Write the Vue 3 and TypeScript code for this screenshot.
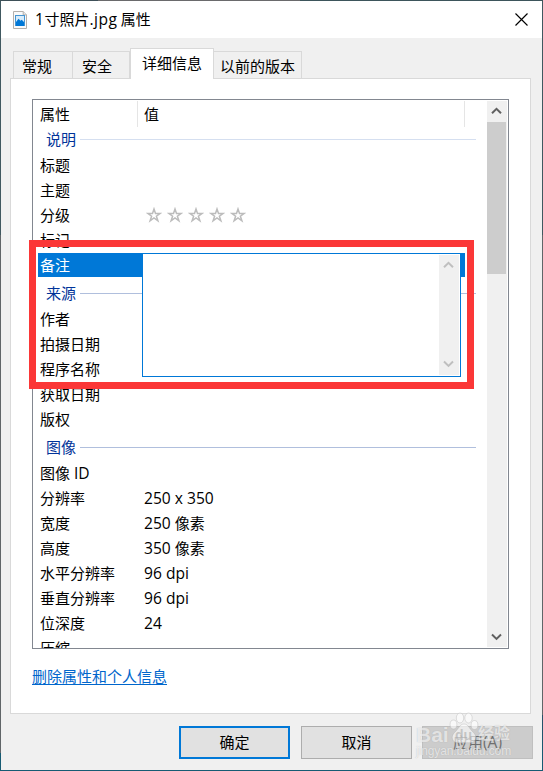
<script setup lang="ts">
interface Row {
  kind: 'group' | 'row'
  label: string
  latin?: string
  unit?: string
  value?: string
  rating?: boolean
  selected?: boolean
}

const tabs: { label: string; cls: string }[] = [
  { label: '常规', cls: 'general' },
  { label: '安全', cls: 'security' },
  { label: '详细信息', cls: 'active' },
  { label: '以前的版本', cls: 'previous' },
]

const rows: Row[] = [
  { kind: 'group', label: '说明' },
  { kind: 'row', label: '标题' },
  { kind: 'row', label: '主题' },
  { kind: 'row', label: '分级', rating: true },
  { kind: 'row', label: '标记' },
  { kind: 'row', label: '备注', selected: true },
  { kind: 'group', label: '来源' },
  { kind: 'row', label: '作者' },
  { kind: 'row', label: '拍摄日期' },
  { kind: 'row', label: '程序名称' },
  { kind: 'row', label: '获取日期' },
  { kind: 'row', label: '版权' },
  { kind: 'group', label: '图像' },
  { kind: 'row', label: '图像', latin: 'ID' },
  { kind: 'row', label: '分辨率', value: '250 x 350' },
  { kind: 'row', label: '宽度', value: '250', unit: '像素' },
  { kind: 'row', label: '高度', value: '350', unit: '像素' },
  { kind: 'row', label: '水平分辨率', value: '96 dpi' },
  { kind: 'row', label: '垂直分辨率', value: '96 dpi' },
  { kind: 'row', label: '位深度', value: '24' },
  { kind: 'row', label: '压缩' },
]
</script>

<template>
  <div class="frame">
    <div class="window">
      <header class="titlebar">
        <svg class="file-icon" width="14" height="18" viewBox="0 0 14 18">
          <path d="M.5.5h9.7l3.3 3.4v13.6H.5z" fill="#fafafa" stroke="#b3b0ad" />
          <path d="M10.2.5v3.4h3.3" fill="#e8e8e8" stroke="#b3b0ad" />
          <path d="M2 4h10v11H2z" fill="#4596d4" />
          <path d="M3 5h8v9H3z" fill="#d9edfb" />
          <path d="M3 11l2.500-3.300 2 2 1.200-1L11 11v4H3z" fill="#0078d7" />
        </svg>
        <h1><span class="latin">1</span>寸照片<span class="latin">.jpg</span> 属性</h1>
        <button class="close" aria-label="关闭">
          <svg width="13" height="13" viewBox="0 0 13 13"><path d="M.5.5l12 12M12.5.5l-12 12" stroke="#000" stroke-width="1.15" /></svg>
        </button>
      </header>

      <nav class="tabs">
        <div v-for="t in tabs" :key="t.label" class="tab" :class="t.cls">{{ t.label }}</div>
      </nav>

      <main class="panel">
        <section class="list">
          <div class="content">
            <div class="head">
              <span class="name">属性</span><span class="val">值</span>
            </div>
            <template v-for="(r, i) in rows" :key="i">
              <div v-if="r.kind === 'group'" class="group" :class="{ first: i === 0 }">
                <span>{{ r.label }}</span><i></i>
              </div>
              <div v-else class="row" :class="{ selected: r.selected }">
                <span class="label">{{ r.label }}<span v-if="r.latin" class="latin gap">{{ r.latin }}</span></span>
                <span v-if="r.value" class="value"><span class="latin">{{ r.value }}</span><span v-if="r.unit" class="unit">{{ r.unit }}</span></span>
                <span v-if="r.rating" class="stars">
                  <svg v-for="n in 5" :key="n" width="16" height="16" viewBox="0 0 16 16">
                    <path d="M8 2l1.500 4.400h4.700l-3.800 2.800 1.500 4.600L8 11l-3.900 2.800 1.500-4.600-3.800-2.800h4.700z" fill="#fff" stroke="#bcbcbc" stroke-width="1.5" />
                  </svg>
                </span>
              </div>
            </template>
          </div>
          <div class="scrollbar">
            <svg class="arrow" width="11" height="8" viewBox="0 0 11 8"><path d="M1 6.200l4.500-4.400L10 6.200" /></svg>
            <div class="thumb"></div>
            <svg class="arrow down" width="11" height="8" viewBox="0 0 11 8"><path d="M1 1.500l4.500 4.400L10 1.500" /></svg>
          </div>
        </section>
        <a class="link">删除属性和个人信息</a>
      </main>

      <footer class="actions">
        <button class="btn primary">确定</button>
        <button class="btn">取消</button>
        <button class="btn disabled">应用<span class="latin">(A)</span></button>
      </footer>
    </div>

    <div class="editor">
      <div class="editor-bar">
        <svg width="11" height="8" viewBox="0 0 11 8"><path d="M1 6.200l4.500-4.400L10 6.200" /></svg>
        <svg width="11" height="8" viewBox="0 0 11 8"><path d="M1 1.500l4.500 4.400L10 1.500" /></svg>
      </div>
    </div>
    <div class="highlight"></div>

    <div class="watermark">
      <div class="brand">
        <span class="bai">Bai</span>
        <span class="paw">
          <svg width="30" height="33" viewBox="0 0 30 33">
            <ellipse cx="4.500" cy="12.500" rx="3.400" ry="4.500" />
            <ellipse cx="11" cy="6" rx="3.700" ry="5" />
            <ellipse cx="19.500" cy="6" rx="3.700" ry="5" />
            <ellipse cx="25.500" cy="13" rx="3.400" ry="4.500" />
            <path d="M15 12c4 0 5 4 8 7s4.500 5 3.500 8c-1 4-5 4-11.500 3.500C8.500 31 4.500 31 3.500 27c-1-3 .5-5 3.500-8s4-7 8-7z" />
          </svg>
          <b>du</b>
        </span>
        <span class="jy">经验</span>
      </div>
      <div class="site">jingyan.baidu.com</div>
    </div>
  </div>
</template>

<style>
body {
  margin: 0;
  overflow: hidden;
}
</style>

<style scoped>
.frame {
  position: relative;
  box-sizing: border-box;
  width: 543px;
  height: 771px;
  padding: 1px;
  background:
    linear-gradient(90deg, #3e5058 98px, #6a6a6c 98px, #6a6a6c 300px, #3d555b 300px) top / 100% 1px no-repeat,
    linear-gradient(#165b73, #165b73) bottom / 100% 1px no-repeat,
    linear-gradient(#405860 235px, #606568 235px, #606568 715px, #2a5068 715px, #165b73 755px) right / 1px 100% no-repeat,
    linear-gradient(#405860 235px, #606568 235px, #606568 753px, #165b73 753px) left / 1px 100% no-repeat;
  font-family: 'Noto Sans CJK SC', sans-serif;
  font-size: 15px;
  line-height: 24px;
  color: #000;
}
.window {
  display: flex;
  flex-direction: column;
  height: 769px;
  background: #f0f0f0;
}
.latin {
  font-family: 'Open Sans', 'Noto Sans', sans-serif;
  font-size: 15.6px;
  line-height: 20px;
}
.titlebar {
  display: flex;
  align-items: center;
  height: 37px;
  padding: 0 14.5px 0 12px;
  background: #fff;
}
h1 {
  flex: 1;
  margin: -1px 0 0 8px;
  font-size: 15px;
  font-weight: 400;
  line-height: 24px;
  white-space: pre;
}
h1 .latin { letter-spacing: .5px; }
.close {
  display: flex;
  padding: 0;
  border: 0;
  background: none;
}
.tabs {
  display: flex;
  align-items: flex-end;
  height: 40px;
  padding-left: 12px;
}
.tab {
  box-sizing: border-box;
  height: 27px;
  border: 1px solid #d9d9d9;
  border-bottom: 0;
  padding-top: 2px;
  text-align: center;
  white-space: nowrap;
}
.general { width: 60px; padding-right: 12px; }
.security { width: 57px; padding-right: 8px; border-left: 0; }
.active {
  z-index: 1;
  width: 84px;
  height: 31px;
  margin-bottom: -1px;
  background: #fff;
}
.previous { width: 88px; border-left: 0; }
.panel {
  box-sizing: border-box;
  width: 521px;
  height: 636px;
  margin-left: 9px;
  padding: 20px 21px 0;
  border: 1px solid #d9d9d9;
  background: #fff;
}
.list {
  box-sizing: border-box;
  display: flex;
  width: 477px;
  height: 550px;
  border: 1px solid #828790;
  overflow: hidden;
}
.content {
  width: 443px;
  margin-left: 5px;
}
.head {
  box-sizing: border-box;
  display: flex;
  width: 427px;
  height: 28px;
  padding-top: 1px;
}
.head span {
  height: 26px;
  border-right: 1px solid #e5e5e5;
  line-height: 25px;
}
.name { width: 97px; padding-left: 2px; }
.val { flex: 1; padding-left: 6px; }
.group {
  display: flex;
  align-items: center;
  height: 29px;
  padding-left: 8px;
  color: #003399;
}
.group i {
  width: 396px;
  height: 1px;
  margin: 2px -5px 0 4px;
  background: #b0bfdd;
}
.group.first { height: 25px; }
.group.first span { margin-top: -4px; }
.group.first i { margin-top: -2px; background: #d5dff0; }
.row {
  box-sizing: border-box;
  display: flex;
  width: 427px;
  height: 25px;
  padding-left: 2px;
  white-space: nowrap;
}
.label { width: 104px; }
.gap { margin-left: 4px; }
.unit { margin-left: 4px; }
.selected {
  height: 24px;
  margin-bottom: 1px;
  background: #0078d7;
  color: #fff;
}
.stars {
  display: flex;
  gap: 5px;
  padding: 4px 0 0 1.5px;
}
.scrollbar {
  display: flex;
  flex-direction: column;
  align-items: center;
  width: 20px;
  height: 546px;
  margin: 1px 1px 0 6px;
  background: #f0f0f0;
}
.arrow { margin: 6px 1px 0 0; }
.arrow path,
.editor-bar path {
  fill: none;
  stroke: #606060;
  stroke-width: 2;
}
.thumb {
  width: 19px;
  height: 152px;
  margin-top: 7px;
  align-self: flex-start;
  background: #cdcdcd;
}
.down { margin: auto 1px 6px 0; }
.link {
  display: inline-block;
  margin-top: 16px;
  line-height: 22px;
  color: #0066cc;
  text-decoration: underline;
  text-underline-offset: 2px;
}
.actions {
  display: flex;
  gap: 11px;
  padding: 12px 0 0 178px;
}
.btn {
  box-sizing: border-box;
  width: 111px;
  height: 33px;
  padding: 0 0 2px;
  border: 1px solid #adadad;
  background: #e1e1e1;
  font: inherit;
  color: #000;
}
.primary { border: 2px solid #0078d7; }
.disabled {
  margin-left: -1px;
  border-color: #bfbfbf;
  background: #ccc;
  color: #707070;
}
.editor {
  position: absolute;
  box-sizing: border-box;
  left: 142px;
  top: 253px;
  width: 319px;
  height: 124px;
  padding: 1px;
  border: 1px solid #0078d7;
  background: #fff;
}
.editor-bar {
  box-sizing: border-box;
  display: flex;
  flex-direction: column;
  align-items: center;
  justify-content: space-between;
  width: 20px;
  height: 120px;
  margin-left: auto;
  padding: 6px 1px 7px 0;
  background: #f0f0f0;
}
.editor-bar path { stroke: #bfbfbf; }
.highlight {
  position: absolute;
  box-sizing: border-box;
  left: 29px;
  top: 240px;
  width: 445px;
  height: 149px;
  border: 7px solid #fb3737;
}
.watermark {
  position: absolute;
  left: 416px;
  top: 712px;
  width: 100px;
  color: rgba(255, 255, 255, .66);
  font-family: 'Liberation Sans', 'Noto Sans CJK SC', sans-serif;
  text-shadow: 0 0 1px rgba(120, 120, 120, .4);
}
.brand {
  display: flex;
  height: 33px;
}
.bai {
  width: 33px;
  padding-top: 11px;
  font-size: 21px;
  font-weight: 700;
  line-height: 24px;
}
.paw {
  display: grid;
  width: 29px;
}
.paw svg, .paw b { grid-area: 1 / 1; }
.paw svg {
  fill: rgba(255, 255, 255, .58);
  stroke: rgba(170, 170, 170, .45);
  stroke-width: .8;
}
.paw b {
  padding: 16px 0 0 6px;
  font-size: 14px;
  line-height: 14px;
  color: rgba(170, 170, 170, .6);
  text-shadow: none;
}
.jy {
  padding-top: 10px;
  font-size: 16px;
  font-weight: 700;
  white-space: nowrap;
}
.site {
  font-size: 12px;
  line-height: 13px;
  letter-spacing: -.1px;
}
</style>
